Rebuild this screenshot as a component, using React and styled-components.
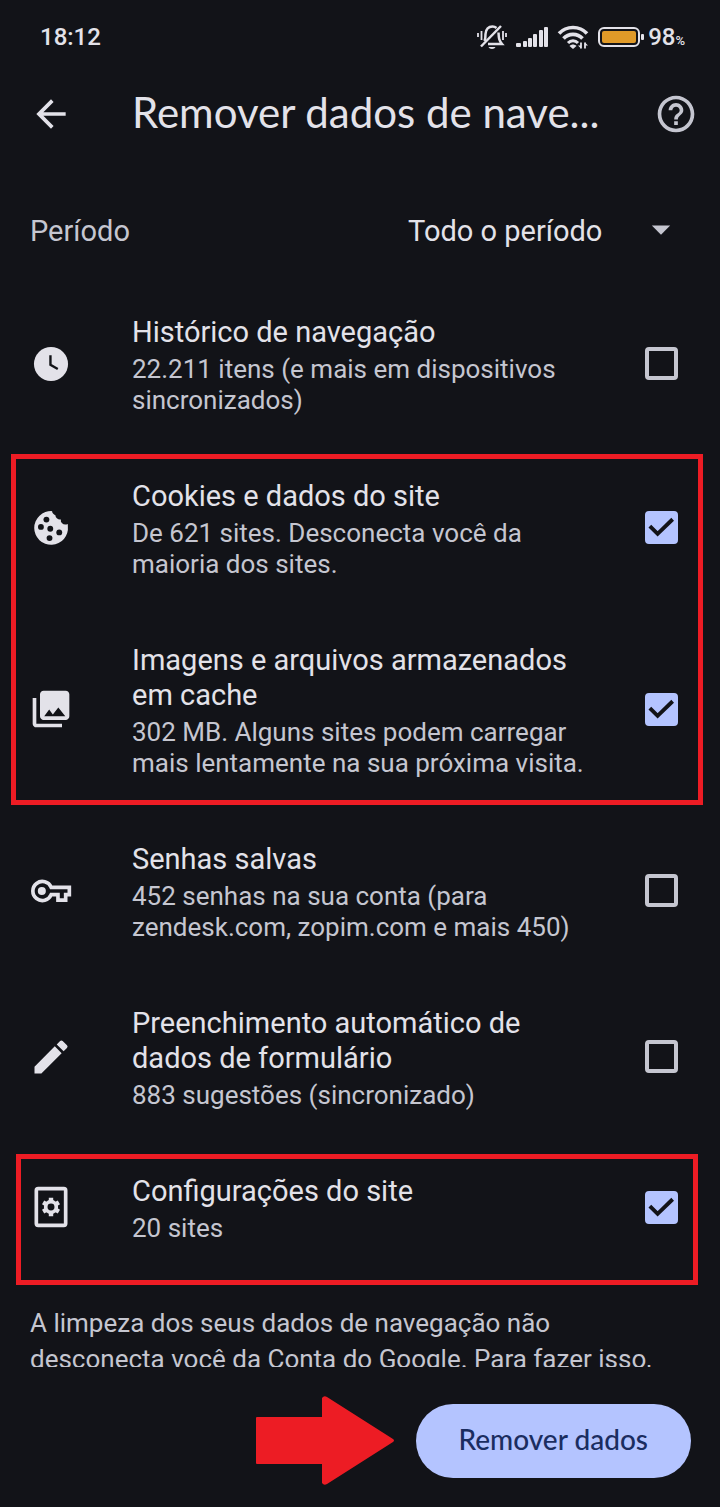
import React, { Component } from 'react';
import styled, { createGlobalStyle } from 'styled-components';

const icons = {
  history: (
    <>
      <circle cx="12" cy="12" r="9.3" />
      <path d="M11.700 7.200v5.300l4 2.200" fill="none" stroke="#121318" strokeWidth="1.300" />
    </>
  ),
  cookie: (
    <>
      <path d="M12.600 2.800A9.200 9.200 0 1 0 21.200 11c0-.6 0-.9-.1-1.200a2.900 2.900 0 0 1-3.200-.5 2.300 2.300 0 0 1-.5-2 2.600 2.600 0 0 1-2.200-.6 2.500 2.500 0 0 1-.8-1.700 2.500 2.500 0 0 1-1.300-.9 2.200 2.200 0 0 1-.5-1.300z" />
      <g fill="#121318">
        <circle cx="9.500" cy="7.400" r="1.600" />
        <circle cx="6.500" cy="11.400" r="1.600" />
        <circle cx="11.600" cy="12.400" r="1.600" />
        <circle cx="16.500" cy="14.400" r="1.600" />
        <circle cx="11.200" cy="17.500" r="1.600" />
      </g>
    </>
  ),
  images: (
    <path d="M22 16V4c0-1.100-.9-2-2-2H8c-1.100 0-2 .9-2 2v12c0 1.100.9 2 2 2h12c1.100 0 2-.9 2-2zM8.300 16l2.700-3.700 2 2.700 3-3.800 3.800 4.800zM2 6v14c0 1.100.9 2 2 2h14v-2H4V6z" />
  ),
  key: (
    <>
      <path
        d="M12.100 10H22v4h-2v3h-4.200v-3h-3.700A5.200 5.200 0 1 1 12.100 10z"
        fill="none"
        stroke="currentColor"
        strokeWidth="2"
      />
      <circle cx="7" cy="12" r="2.200" />
    </>
  ),
  pencil: (
    <path d="M3 17.250V21h3.750L17.810 9.940l-3.750-3.750L3 17.250zM20.710 7.040a1 1 0 0 0 0-1.410l-2.340-2.340a1 1 0 0 0-1.410 0l-1.830 1.830 3.750 3.750 1.830-1.830z" />
  ),
  site: (
    <>
      <rect x="4" y="2" width="16" height="20" rx="1" fill="none" stroke="currentColor" strokeWidth="2" />
      <g fill="none" stroke="currentColor">
        <circle cx="12" cy="12" r="2.900" strokeWidth="2" />
        <path
          d="M12 7v2M12 15v2M7.700 9.500l1.700 1M14.600 13.500l1.700 1M7.700 14.500l1.700-1M14.600 10.500l1.700-1"
          strokeWidth="2.400"
        />
      </g>
    </>
  ),
};

const historyItems = [
  {
    id: 'history',
    title: 'Histórico de navegação',
    text: '22.211 itens (e mais em dispositivos sincronizados)',
  },
];

const siteItems = [
  {
    id: 'cookie',
    title: 'Cookies e dados do site',
    text: 'De 621 sites. Desconecta você da maioria dos sites.',
  },
  {
    id: 'images',
    title: 'Imagens e arquivos armazenados em cache',
    text: '302 MB. Alguns sites podem carregar mais lentamente na sua próxima visita.',
  },
];

const formItems = [
  {
    id: 'key',
    title: 'Senhas salvas',
    text: '452 senhas na sua conta (para zendesk.com, zopim.com e mais 450)',
  },
  {
    id: 'pencil',
    title: 'Preenchimento automático de dados de formulário',
    text: '883 sugestões (sincronizado)',
  },
];

const settingsItems = [{ id: 'site', title: 'Configurações do site', text: '20 sites' }];

const StatusIcons = () => (
  <StatusIconRow>
    <svg width="30" height="26" viewBox="0 0 30 26" fill="none" stroke="#e3e2e9" strokeWidth="2.500">
      <path d="M7.500 17c1-2 1-4 1-7C9 5 12 2.500 15.500 2.500c1.800 0 3 .6 4 1.500M21.500 8.500c.3 6 .5 8 3.500 11.500H11" />
      <path d="M4 22.500L24 2" />
      <path d="M11.500 23h7c-1 2.500-6 2.500-7 0z" fill="#e3e2e9" stroke="none" />
      <path d="M1 9v4M4.500 7v9M26 7v9M29 9v4" strokeWidth="1.800" />
    </svg>
    <svg width="34" height="26" viewBox="0 0 34 26" fill="#e3e2e9">
      <rect x="1" y="19" width="5" height="4" rx="1" />
      <rect x="8" y="17" width="4" height="6" rx="1" />
      <rect x="13" y="14" width="4" height="9" rx="1" />
      <rect x="18" y="10" width="4" height="13" rx="1" />
      <rect x="24" y="6" width="4" height="17" rx="1" />
      <rect x="29" y="3" width="4" height="20" rx="1" />
    </svg>
    <svg width="32" height="26" viewBox="0 0 32 26" fill="none" stroke="#e3e2e9" strokeWidth="3.600">
      <path d="M2 9.500C9.500 1.500 22.500 1.500 30 9.500" />
      <path d="M6.500 14.500c5-5.500 14-5.500 19 0" />
      <path d="M11 19c2.800-3 7.200-3 10 0" strokeWidth="3" />
      <path d="M12.500 22c2-2 5-2 7 0L16 25z" fill="#e3e2e9" stroke="none" />
      <path d="M24 18.500v6M28 18.500v6" strokeWidth="1.800" />
      <path d="M21 21.500h3v3zM31 21.500h-3v-3z" fill="#e3e2e9" stroke="none" />
    </svg>
    <svg width="47" height="26" viewBox="0 0 47 26">
      <rect x="2" y="4" width="40" height="18" rx="5" fill="none" stroke="#e3e2e9" strokeWidth="2" />
      <rect x="5" y="7" width="34" height="12" rx="2" fill="#e09a28" />
      <rect x="44" y="10" width="3" height="6" rx="1" fill="#e3e2e9" />
    </svg>
  </StatusIconRow>
);

class App extends Component {
  state = {
    history: false,
    cookie: true,
    images: true,
    key: false,
    pencil: false,
    site: true,
  };

  toggle = (id) => {
    this.setState((state) => ({ [id]: !state[id] }));
  };

  renderItems = (items) =>
    items.map(({ id, title, text }) => (
      <Item key={id} htmlFor={id}>
        <Icon viewBox="0 0 24 24">{icons[id]}</Icon>
        <ItemText>
          <ItemTitle>{title}</ItemTitle>
          <ItemInfo>{text}</ItemInfo>
        </ItemText>
        <CheckWrap>
          <Checkbox id={id} type="checkbox" checked={this.state[id]} onChange={() => this.toggle(id)} />
          {this.state[id] && (
            <CheckMark viewBox="0 0 34 34">
              <path d="M5 15.500l8 8L28.500 8.500" />
            </CheckMark>
          )}
        </CheckWrap>
      </Item>
    ));

  render() {
    return (
      <Screen>
        <GlobalStyle />
        <StatusBar>
          <Clock>18:12</Clock>
          <StatusGroup>
            <StatusIcons />
            <Battery>
              98<small>%</small>
            </Battery>
          </StatusGroup>
        </StatusBar>
        <Header>
          <IconButton aria-label="Voltar">
            <Icon viewBox="0 0 24 24">
              <path d="M20 11H7.830l5.590-5.590L12 4l-8 8 8 8 1.410-1.410L7.830 13H20v-2z" />
            </Icon>
          </IconButton>
          <Title>Remover dados de nave...</Title>
          <IconButton aria-label="Ajuda">
            <Icon viewBox="0 0 24 24" $muted>
              <path d="M11 18h2v-2h-2v2zm1-16C6.480 2 2 6.480 2 12s4.480 10 10 10 10-4.480 10-10S17.520 2 12 2zm0 18c-4.410 0-8-3.590-8-8s3.590-8 8-8 8 3.590 8 8-3.590 8-8 8zm0-14c-2.210 0-4 1.790-4 4h2c0-1.100.9-2 2-2s2 .9 2 2c0 2-3 1.750-3 5h2c0-2.250 3-2.500 3-5 0-2.210-1.790-4-4-4z" />
            </Icon>
          </IconButton>
        </Header>
        <Content>
          <Period>
            <PeriodLabel htmlFor="period">Período</PeriodLabel>
            <SelectWrap>
              <Select id="period">
                <option>Todo o período</option>
              </Select>
              <SelectArrow viewBox="0 0 24 24" $muted>
                <path d="M7 9l5 5 5-5z" />
              </SelectArrow>
            </SelectWrap>
          </Period>
          <Group>{this.renderItems(historyItems)}</Group>
          <Group>
            {this.renderItems(siteItems)}
            <Highlight $inset="9px 17px 3px 11px" />
          </Group>
          <Group>{this.renderItems(formItems)}</Group>
          <Group>
            {this.renderItems(settingsItems)}
            <Highlight $inset="14px 22px -12px 16px" />
          </Group>
          <Note>
            A limpeza dos seus dados de navegação não desconecta você da Conta do Google. Para fazer
            isso,
          </Note>
        </Content>
        <Footer>
          <svg width="138" height="89" viewBox="0 0 138 89" fill="#ed1c24">
            <path d="M1 21h65V2q2-3 5-1l66 42q2 1.500 0 3L71 88q-3 2-5-1V68H1q-1 0-1-1V22q0-1 1-1z" />
          </svg>
          <RemoveButton>Remover dados</RemoveButton>
        </Footer>
      </Screen>
    );
  }
}

export default App;

const GlobalStyle = createGlobalStyle`
  * {
    box-sizing: border-box;
  }

  body {
    margin: 0;
    background-color: #121318;
    color: #e3e2e9;
    font-family: Roboto, sans-serif;
  }
`;

const Screen = styled.main`
  display: flex;
  flex-direction: column;
  height: 100vh;
`;

const StatusBar = styled.div`
  display: flex;
  flex-shrink: 0;
  align-items: center;
  justify-content: space-between;
  height: 74px;
  padding: 0 35px 0 40px;
`;

const Clock = styled.time`
  font-size: 24px;
  font-weight: 500;
`;

const StatusGroup = styled.div`
  display: flex;
  align-items: center;
  gap: 4px;
`;

const StatusIconRow = styled.div`
  display: flex;
  align-items: center;
  gap: 8px;
`;

const Battery = styled.span`
  font-size: 24px;
  font-weight: 500;

  small {
    font-size: 13px;
  }
`;

const Header = styled.header`
  display: flex;
  flex-shrink: 0;
  align-items: center;
  height: 80px;
  padding: 0 22px 0 29px;
`;

const IconButton = styled.button`
  display: flex;
  margin: 0;
  padding: 0;
  border: 0;
  background: none;
  color: inherit;
`;

const Icon = styled.svg`
  flex-shrink: 0;
  width: 44px;
  height: 44px;
  fill: currentColor;
  color: ${({ $muted }) => ($muted ? '#c5c6d0' : '#e3e2e9')};
`;

const Title = styled.h1`
  flex: 1;
  margin: 0;
  padding: 0 0 4px 59px;
  font-family: Lato, sans-serif;
  font-weight: 400;
  font-size: 42px;
  white-space: nowrap;
`;

const Content = styled.div`
  flex: 1;
  min-height: 0;
  padding-top: 44px;
  overflow: hidden;
`;

const Period = styled.div`
  display: flex;
  align-items: center;
  justify-content: space-between;
  height: 66px;
  margin-bottom: 17px;
  padding: 0 37px 0 30px;
  font-size: 29px;
`;

const PeriodLabel = styled.label`
  color: #c5c6d0;
`;

const SelectWrap = styled.div`
  display: grid;
  align-items: center;
`;

const Select = styled.select`
  grid-area: 1 / 1;
  margin: 0;
  padding: 0 80px 0 0;
  border: 0;
  appearance: none;
  background: none;
  color: inherit;
  font: inherit;
`;

const SelectArrow = styled(Icon)`
  grid-area: 1 / 1;
  justify-self: end;
  pointer-events: none;
`;

const Group = styled.section`
  position: relative;
`;

const Highlight = styled.div`
  position: absolute;
  inset: ${({ $inset }) => $inset};
  border: 5px solid #ed1c24;
  pointer-events: none;
`;

const Item = styled.label`
  display: grid;
  grid-template-columns: 44px 1fr 33px;
  align-items: center;
  padding: 30px 42px 29px 29px;
`;

const ItemText = styled.div`
  padding: 4px 40px 0 59px;
`;

const ItemTitle = styled.div`
  margin-bottom: 4px;
  font-size: 29px;
  line-height: 35px;
`;

const ItemInfo = styled.div`
  color: #c5c6d0;
  font-size: 26px;
  line-height: 31px;
`;

const CheckWrap = styled.div`
  display: grid;
`;

const Checkbox = styled.input`
  grid-area: 1 / 1;
  width: 33px;
  height: 33px;
  margin: 0;
  border: 4px solid #c5c6d0;
  border-radius: 4px;
  appearance: none;

  &:checked {
    border-color: #b4c4ff;
    background-color: #b4c4ff;
  }
`;

const CheckMark = styled.svg`
  grid-area: 1 / 1;
  width: 33px;
  height: 33px;
  fill: none;
  stroke: #121318;
  stroke-width: 4;
  pointer-events: none;
`;

const Note = styled.p`
  margin: 0;
  padding: 32px 30px 0;
  color: #c5c6d0;
  font-size: 26px;
  line-height: 36px;
`;

const Footer = styled.footer`
  display: flex;
  flex-shrink: 0;
  align-items: center;
  justify-content: flex-end;
  gap: 22px;
  padding: 29px 29px 22px;
`;

const RemoveButton = styled.button`
  height: 74px;
  margin: 0;
  padding: 0 43px 4px;
  border: 0;
  border-radius: 37px;
  background-color: #b4c4ff;
  color: #1b2d60;
  font-family: Lato, sans-serif;
  font-weight: 500;
  font-size: 28px;
`;
